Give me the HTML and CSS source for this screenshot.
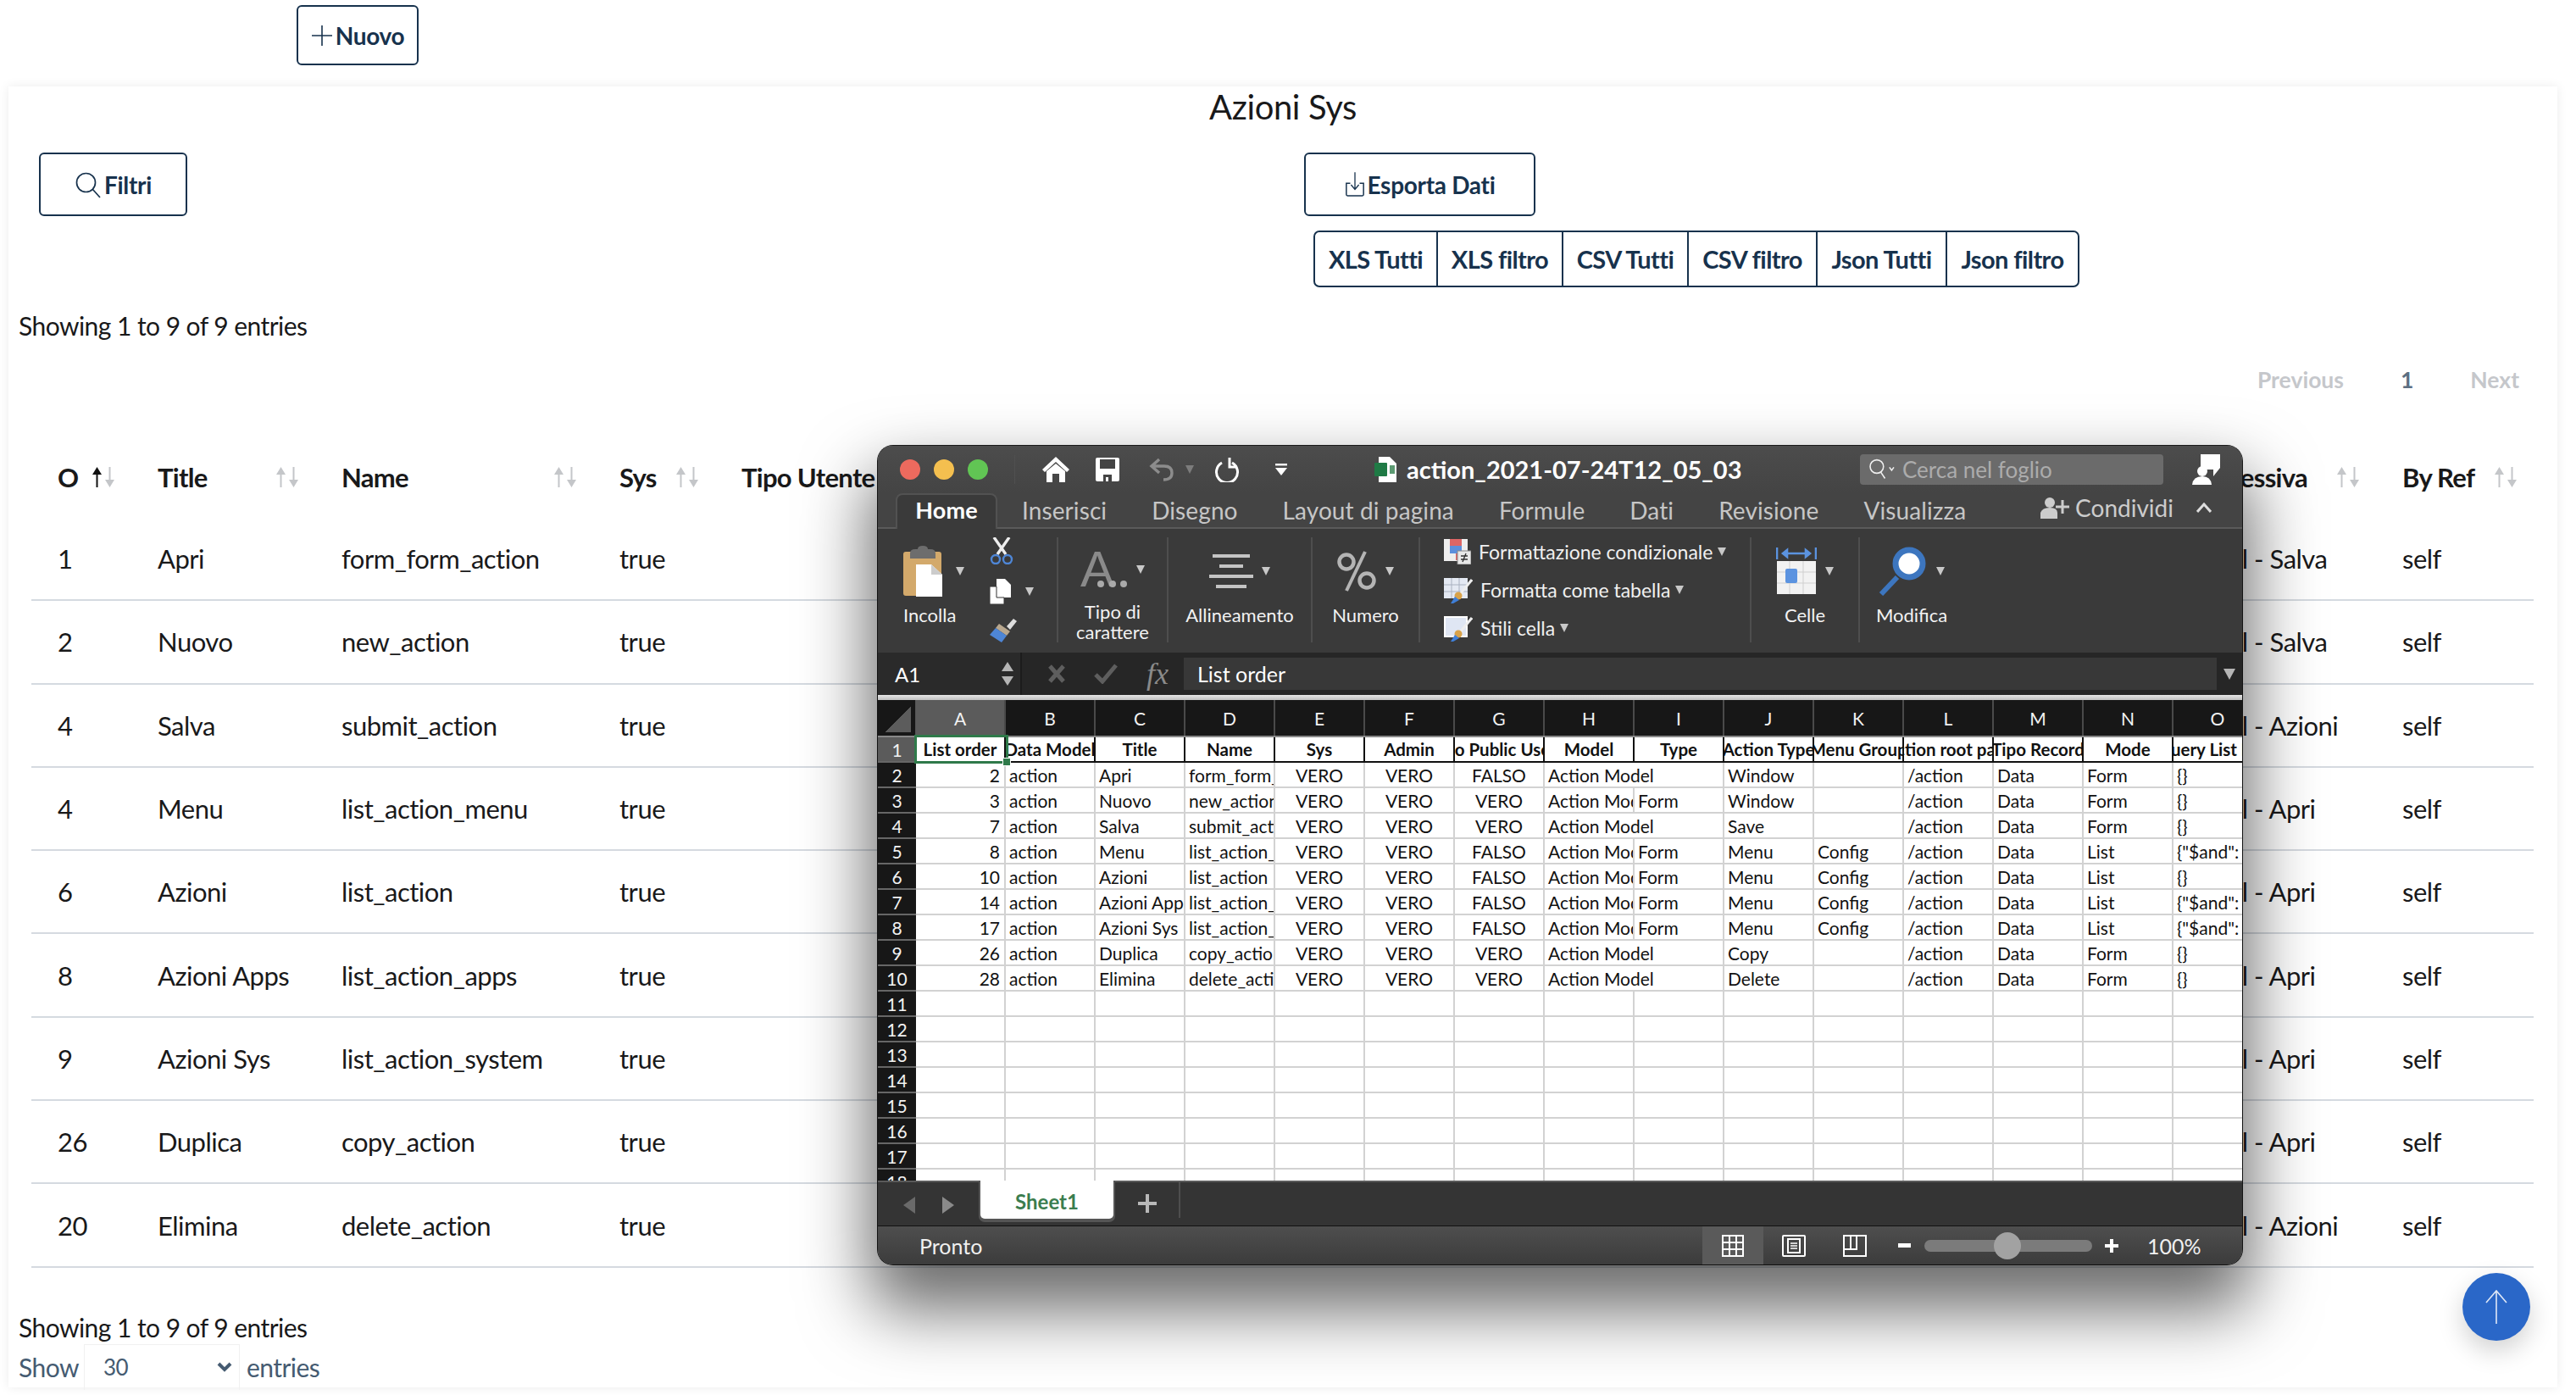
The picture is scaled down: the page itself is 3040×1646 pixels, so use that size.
FILE: index.html
```html
<!DOCTYPE html>
<html lang="en">
<head>
    <meta charset="UTF-8">
    <meta name="viewport" content="width=device-width, initial-scale=1.0">
    <title>Azioni Sys</title>
    <link rel="stylesheet" href="styles.css">
</head>
<body>
    <svg class="defs" width="0" height="0">
        <symbol id="sort" viewBox="0 0 30 24">
            <path d="M7.5 0 L13 9 H8.5 V24 H6.5 V9 H2 Z" fill="#c4c6c9"/>
            <path d="M22.5 24 L28 15 H23.5 V0 H21.5 V15 H17 Z" fill="#c4c6c9"/>
        </symbol>
        <symbol id="sort-up" viewBox="0 0 30 24">
            <path d="M7.5 0 L13 9 H8.5 V24 H6.5 V9 H2 Z" fill="#111"/>
            <path d="M22.5 24 L28 15 H23.5 V0 H21.5 V15 H17 Z" fill="#c4c6c9"/>
        </symbol>
    </svg>

    <div class="topbar">
        <button class="btn btn-new">
            <svg width="26" height="26" viewBox="0 0 26 26"><path d="M13 1V25M1 13H25" stroke="#17324d" stroke-width="1.6" fill="none"/></svg>
            Nuovo
        </button>
    </div>

    <div class="card">
        <h2 class="page-title">Azioni Sys</h2>

        <div class="tools">
            <div>
                <button class="btn btn-tool btn-filter">
                    <svg width="32" height="32" viewBox="0 0 32 32"><circle cx="13.5" cy="13.5" r="11" stroke="#17324d" stroke-width="1.7" fill="none"/><path d="M21.5 21.5L30 31" stroke="#17324d" stroke-width="1.7"/></svg>
                    Filtri
                </button>
            </div>
            <div>
                <button class="btn btn-tool btn-export">
                    <svg width="24" height="32" viewBox="0 0 26 32"><path d="M13 0V21M8 16L13 22L18 16" stroke="#17324d" stroke-width="1.4" fill="none"/><path d="M7 14H2V28.5Q2 30 3.5 30H22.5Q24 30 24 28.5V14H19" stroke="#17324d" stroke-width="1.6" fill="none"/></svg>
                    Esporta Dati
                </button>
                <div class="export-group">
                    <button class="export-item w-145">XLS Tutti</button>
                    <button class="export-item w-148">XLS filtro</button>
                    <button class="export-item w-148">CSV Tutti</button>
                    <button class="export-item w-152">CSV filtro</button>
                    <button class="export-item w-153">Json Tutti</button>
                    <button class="export-item w-156">Json filtro</button>
                </div>
            </div>
        </div>

        <div class="info info-top">Showing 1 to 9 of 9 entries</div>

        <div class="pager">
            <span class="pager-off">Previous</span>
            <span class="pager-on">1</span>
            <span class="pager-off">Next</span>
        </div>

        <table class="grid">
            <colgroup>
                <col class="c-order">
                <col class="c-title">
                <col class="c-name">
                <col class="c-sys">
                <col class="c-user">
                <col class="c-next">
                <col class="c-ref">
            </colgroup>
            <thead>
                <tr>
                    <th><div class="th-in">O <svg class="sort"><use href="#sort-up"/></svg></div></th>
                    <th><div class="th-in">Title <svg class="sort"><use href="#sort"/></svg></div></th>
                    <th><div class="th-in">Name <svg class="sort"><use href="#sort"/></svg></div></th>
                    <th><div class="th-in">Sys <svg class="sort"><use href="#sort"/></svg></div></th>
                    <th><div class="th-in">Tipo Utente</div></th>
                    <th class="th-next"><div class="th-in">Azione Successiva <svg class="sort"><use href="#sort"/></svg></div></th>
                    <th><div class="th-in">By Ref <svg class="sort"><use href="#sort"/></svg></div></th>
                </tr>
            </thead>
            <tbody>
                <tr><td>1</td><td>Apri</td><td>form_form_action</td><td>true</td><td></td><td>Action Model - Salva</td><td>self</td></tr>
                <tr><td>2</td><td>Nuovo</td><td>new_action</td><td>true</td><td></td><td>Action Model - Salva</td><td>self</td></tr>
                <tr><td>4</td><td>Salva</td><td>submit_action</td><td>true</td><td></td><td>Action Model - Azioni</td><td>self</td></tr>
                <tr><td>4</td><td>Menu</td><td>list_action_menu</td><td>true</td><td></td><td>Action Model - Apri</td><td>self</td></tr>
                <tr><td>6</td><td>Azioni</td><td>list_action</td><td>true</td><td></td><td>Action Model - Apri</td><td>self</td></tr>
                <tr><td>8</td><td>Azioni Apps</td><td>list_action_apps</td><td>true</td><td></td><td>Action Model - Apri</td><td>self</td></tr>
                <tr><td>9</td><td>Azioni Sys</td><td>list_action_system</td><td>true</td><td></td><td>Action Model - Apri</td><td>self</td></tr>
                <tr><td>26</td><td>Duplica</td><td>copy_action</td><td>true</td><td></td><td>Action Model - Apri</td><td>self</td></tr>
                <tr><td>20</td><td>Elimina</td><td>delete_action</td><td>true</td><td></td><td>Action Model - Azioni</td><td>self</td></tr>
            </tbody>
        </table>

        <div class="info info-bottom">Showing 1 to 9 of 9 entries</div>
        <div class="length">
            <span>Show</span>
            <div class="length-select">
                <span>30</span>
                <svg width="18" height="12" viewBox="0 0 18 12"><path d="M2 2L9 9L16 2" stroke="#455b71" stroke-width="4" fill="none"/></svg>
            </div>
            <span>entries</span>
        </div>
    </div>

    <a class="to-top">
        <svg width="30" height="40" viewBox="0 0 30 40"><path d="M15 1V40M3 15L15 1L27 15" stroke="#dfe8f7" stroke-width="1.6" fill="none"/></svg>
    </a>

    <!-- excel window lying over the page -->
    <div class="xl-win">
        <div class="xl-title">
            <span class="light red"></span>
            <span class="light yellow"></span>
            <span class="light green"></span>
            <span class="xl-title-sep"></span>
            <svg class="i-home" width="32" height="30" viewBox="0 0 32 30"><path d="M16 0L32 15L29 18L16 6L3 18L0 15Z" fill="#fff"/><path d="M5 17L16 8L27 17V30H20V20H12V30H5Z" fill="#fff"/></svg>
            <svg class="i-save" width="28" height="28" viewBox="0 0 28 28"><path d="M2 0H26Q28 0 28 2V26Q28 28 26 28H2Q0 28 0 26V2Q0 0 2 0Z" fill="#fff"/><rect x="5" y="2" width="18" height="11" fill="#444"/><path d="M9 28V20H19V28H15V23H12V28Z" fill="#444"/></svg>
            <svg class="i-undo" width="30" height="28" viewBox="0 0 30 28"><path d="M12 2L3 10L12 18M3 10H18Q27 10 27 18Q27 26 17 26" stroke="#8c8c8c" stroke-width="3.4" fill="none"/></svg>
            <span class="caret caret-dim"></span>
            <svg class="i-redo" width="30" height="30" viewBox="0 0 30 30"><path d="M9 7A12.5 12.5 0 1 0 21 7" stroke="#fff" stroke-width="3" fill="none"/><path d="M20 0V11H29" stroke="#fff" stroke-width="3" fill="none" transform="translate(-2 1)"/></svg>
            <svg class="i-more" width="14" height="14" viewBox="0 0 14 14"><rect width="14" height="2.4" fill="#fff"/><path d="M0 5H14L7 14Z" fill="#fff"/></svg>
            <svg class="i-file" width="26" height="30" viewBox="0 0 26 30"><path d="M5 0H18L26 8V30H5Z" fill="#fff"/><rect y="7" width="15" height="16" rx="1" fill="#1f7a45"/><path d="M18 10h6v10h-6z" fill="#5c9a72"/></svg>
            <span class="xl-filename">action_2021-07-24T12_05_03</span>
            <div class="xl-search">
                <svg width="36" height="32" viewBox="0 0 36 32"><circle cx="11" cy="12" r="9" stroke="#eee" stroke-width="1.8" fill="none"/><path d="M16 19L22 28M28 13L31 17L34 13" stroke="#eee" stroke-width="1.8" fill="none"/></svg>
                <span>Cerca nel foglio</span>
            </div>
            <svg class="i-comment" width="35" height="36" viewBox="0 0 35 36"><path d="M12 0H35V16L27 26V18H12Z" fill="#fff"/><circle cx="14" cy="20" r="6" fill="#fff"/><path d="M2 36Q3 26 14 26Q24 26 25 36Z" fill="#fff"/></svg>
        </div>

        <div class="xl-tabs">
            <span class="xl-tab xl-tab-on">Home</span>
            <span class="xl-tab">Inserisci</span>
            <span class="xl-tab">Disegno</span>
            <span class="xl-tab">Layout di pagina</span>
            <span class="xl-tab">Formule</span>
            <span class="xl-tab">Dati</span>
            <span class="xl-tab">Revisione</span>
            <span class="xl-tab">Visualizza</span>
            <div class="xl-share">
                <svg width="34" height="26" viewBox="0 0 34 26"><circle cx="11" cy="7" r="6" fill="#ccc"/><path d="M0 26V19Q2 13 11 13Q20 13 20 19V26Z" fill="#ccc"/><path d="M26 4V20M18 12H34" stroke="#ccc" stroke-width="3"/></svg>
                <span>Condividi</span>
                <svg width="18" height="12" viewBox="0 0 18 12"><path d="M1 11L9 2L17 11" stroke="#ddd" stroke-width="3" fill="none"/></svg>
            </div>
        </div>

        <div class="xl-ribbon">
            <div class="rb-group rb-paste">
                <div class="rb-big rb-big-paste">
                    <div class="rb-icon">
                        <svg width="46" height="60" viewBox="0 0 46 60"><rect y="7" width="45" height="52" rx="3" fill="#d3a96b"/><path d="M8 9Q8 4 14 4H17Q17 0 23 0Q29 0 29 4H32Q38 4 38 9V15H8Z" fill="#6d6d6d"/><path d="M15 22H33L46 34V60H15Z" fill="#fff"/><path d="M33 22V34H46" fill="#ccc"/></svg>
                        <span class="caret caret-wide"></span>
                    </div>
                    <span class="rb-label">Incolla</span>
                </div>
                <div class="rb-small">
                    <svg width="28" height="32" viewBox="0 0 28 32"><path d="M5 0L19 20M23 0L9 20" stroke="#eee" stroke-width="3.4"/><circle cx="7" cy="26" r="5" stroke="#4e86d6" stroke-width="2.4" fill="none"/><circle cx="21" cy="26" r="5" stroke="#4e86d6" stroke-width="2.4" fill="none"/></svg>
                    <div class="rb-copy">
                        <svg width="26" height="30" viewBox="0 0 26 30"><path d="M8 0H18L25 7V22H8Z" fill="#fff"/><path d="M0 9H8V22H17V30H0Z" fill="#fff" stroke="#333" stroke-width="1"/></svg>
                        <span class="caret caret-wide"></span>
                    </div>
                    <svg width="32" height="28" viewBox="0 0 32 28"><path d="M20 9L28 0L32 3L24 13Z" fill="#ddd"/><path d="M11 6L24 15L20 20L7 11Z" fill="#b8a78e"/><path d="M7 11L20 20L14 28L0 19Z" fill="#4e86d6"/></svg>
                </div>
            </div>
            <div class="rb-group rb-font">
                <div class="rb-big">
                    <div class="rb-icon">
                        <svg class="rb-a" width="56" height="46" viewBox="0 0 56 46"><text x="0" y="43" font-family="Liberation Sans" font-size="60" fill="#8a8a8a">A</text><circle cx="24" cy="40" r="4" fill="#aaa"/><circle cx="38" cy="40" r="4" fill="#aaa"/><circle cx="51" cy="40" r="4" fill="#aaa"/></svg>
                        <span class="caret"></span>
                    </div>
                    <span class="rb-label">Tipo di<br>carattere</span>
                </div>
            </div>
            <div class="rb-group rb-align">
                <div class="rb-big">
                    <div class="rb-icon">
                        <svg width="52" height="40" viewBox="0 0 52 40"><rect x="4" width="44" height="4" fill="#c4c4c4"/><rect x="12" y="12" width="28" height="4" fill="#c4c4c4"/><rect y="24" width="52" height="4" fill="#c4c4c4"/><rect x="8" y="36" width="36" height="4" fill="#c4c4c4"/></svg>
                        <span class="caret"></span>
                    </div>
                    <span class="rb-label">Allineamento</span>
                </div>
            </div>
            <div class="rb-group rb-number">
                <div class="rb-big">
                    <div class="rb-icon">
                        <svg width="48" height="48" viewBox="0 0 48 48"><circle cx="12" cy="13" r="8.5" stroke="#b4b4b4" stroke-width="4.5" fill="none"/><circle cx="36" cy="35" r="8.5" stroke="#b4b4b4" stroke-width="4.5" fill="none"/><path d="M34 1L12 47" stroke="#b4b4b4" stroke-width="4"/></svg>
                        <span class="caret"></span>
                    </div>
                    <span class="rb-label">Numero</span>
                </div>
            </div>
            <div class="rb-group rb-styles">
                <div class="rb-line">
                    <svg width="32" height="30" viewBox="0 0 32 30"><rect width="28" height="26" fill="#eee"/><rect x="7" width="14" height="8" fill="#d66"/><rect x="7" y="8" width="14" height="9" fill="#5c8fdc"/><rect x="14" y="17" width="7" height="8" fill="#d66"/><rect x="16" y="14" width="16" height="16" fill="#e8e8e8" stroke="#888"/><path d="M20 20H28M20 24H28M26 17L22 27" stroke="#333" stroke-width="1.4"/></svg>
                    <span>Formattazione condizionale</span><span class="caret"></span>
                </div>
                <div class="rb-line">
                    <svg width="34" height="32" viewBox="0 0 34 32"><rect y="2" width="28" height="24" fill="#e4e9f3"/><path d="M0 10H28M0 18H28M9 2V26M18 2V26" stroke="#a9b1c0"/><path d="M33 4L19 21" stroke="#eee" stroke-width="3"/><circle cx="17" cy="23" r="4.5" fill="#d8a24a"/><path d="M13 24L18 28L11 32H8Z" fill="#3f7fd8"/></svg>
                    <span>Formatta come tabella</span><span class="caret"></span>
                </div>
                <div class="rb-line">
                    <svg width="34" height="32" viewBox="0 0 34 32"><rect x="1" y="3" width="26" height="23" fill="#dfe6f3" stroke="#fff" stroke-width="2"/><path d="M33 4L19 21" stroke="#eee" stroke-width="3"/><circle cx="17" cy="23" r="4.5" fill="#d8a24a"/><path d="M13 24L18 28L11 32H8Z" fill="#3f7fd8"/></svg>
                    <span>Stili cella</span><span class="caret"></span>
                </div>
            </div>
            <div class="rb-group rb-cells">
                <div class="rb-big">
                    <div class="rb-icon">
                        <svg width="48" height="56" viewBox="0 0 48 56"><path d="M1 0V14M47 0V14M8 7H40M8 7L13 3V11ZM40 7L35 3V11Z" stroke="#5b93e0" stroke-width="2.6" fill="#5b93e0"/><rect x="1" y="16" width="46" height="39" fill="#f2f2f2"/><path d="M1 29H47M1 42H47M16 16V55M32 16V55" stroke="#cfcfcf"/><rect x="11" y="25" width="14" height="17" rx="2" fill="#5b93e0"/></svg>
                        <span class="caret"></span>
                    </div>
                    <span class="rb-label">Celle</span>
                </div>
            </div>
            <div class="rb-group rb-edit">
                <div class="rb-big">
                    <div class="rb-icon">
                        <svg width="58" height="58" viewBox="0 0 58 58"><path d="M22 36L3 56" stroke="#3d76bf" stroke-width="6"/><circle cx="36" cy="20" r="16" fill="#fff" stroke="#3d76bf" stroke-width="7"/></svg>
                        <span class="caret"></span>
                    </div>
                    <span class="rb-label">Modifica</span>
                </div>
            </div>
        </div>

        <div class="xl-formula">
            <div class="xl-namebox">
                <span>A1</span>
                <span class="spin"><i class="spin-up"></i><i class="spin-down"></i></span>
            </div>
            <svg class="i-x" width="20" height="22" viewBox="0 0 20 22"><path d="M2 2L18 20M18 2L2 20" stroke="#5e5e5e" stroke-width="5"/></svg>
            <svg class="i-ok" width="28" height="24" viewBox="0 0 28 24"><path d="M2 13L10 21L26 2" stroke="#5e5e5e" stroke-width="5" fill="none"/></svg>
            <span class="xl-fx">fx</span>
            <div class="xl-input">List order</div>
            <span class="xl-fdrop"></span>
        </div>

        <div class="xl-band"></div>

        <div class="xl-sheet">
            <div class="x-row x-head">
                <div class="x-corner"><span></span></div>
                <div class="x-col x-col-on">A</div><div class="x-col">B</div><div class="x-col">C</div><div class="x-col">D</div><div class="x-col">E</div><div class="x-col">F</div><div class="x-col">G</div><div class="x-col">H</div><div class="x-col">I</div><div class="x-col">J</div><div class="x-col">K</div><div class="x-col">L</div><div class="x-col">M</div><div class="x-col">N</div><div class="x-col">O</div>
            </div>

            <div class="x-row x-bold">
                <div class="x-num x-num-on">1</div>
                <div class="x-c ctr">List order</div><div class="x-c ctr">Data Model</div><div class="x-c ctr">Title</div><div class="x-c ctr">Name</div><div class="x-c ctr">Sys</div><div class="x-c ctr">Admin</div><div class="x-c ctr">No Public User</div><div class="x-c ctr">Model</div><div class="x-c ctr">Type</div><div class="x-c ctr">Action Type</div><div class="x-c ctr">Menu Group</div><div class="x-c ctr">Action root path</div><div class="x-c ctr">Tipo Record</div><div class="x-c ctr">Mode</div><div class="x-c ctr">Query List Data</div>
            </div>

            <div class="x-row">
                <div class="x-num">2</div>
                <div class="x-c rgt">2</div><div class="x-c">action</div><div class="x-c">Apri</div><div class="x-c">form_form_action</div><div class="x-c ctr">VERO</div><div class="x-c ctr">VERO</div><div class="x-c ctr">FALSO</div><div class="x-c span2">Action Model</div><div class="x-c">Window</div><div class="x-c"></div><div class="x-c">/action</div><div class="x-c">Data</div><div class="x-c">Form</div><div class="x-c">{}</div>
            </div>
            <div class="x-row">
                <div class="x-num">3</div>
                <div class="x-c rgt">3</div><div class="x-c">action</div><div class="x-c">Nuovo</div><div class="x-c">new_action</div><div class="x-c ctr">VERO</div><div class="x-c ctr">VERO</div><div class="x-c ctr">VERO</div><div class="x-c">Action Model</div><div class="x-c">Form</div><div class="x-c">Window</div><div class="x-c"></div><div class="x-c">/action</div><div class="x-c">Data</div><div class="x-c">Form</div><div class="x-c">{}</div>
            </div>
            <div class="x-row">
                <div class="x-num">4</div>
                <div class="x-c rgt">7</div><div class="x-c">action</div><div class="x-c">Salva</div><div class="x-c">submit_action</div><div class="x-c ctr">VERO</div><div class="x-c ctr">VERO</div><div class="x-c ctr">VERO</div><div class="x-c span2">Action Model</div><div class="x-c">Save</div><div class="x-c"></div><div class="x-c">/action</div><div class="x-c">Data</div><div class="x-c">Form</div><div class="x-c">{}</div>
            </div>
            <div class="x-row">
                <div class="x-num">5</div>
                <div class="x-c rgt">8</div><div class="x-c">action</div><div class="x-c">Menu</div><div class="x-c">list_action_menu</div><div class="x-c ctr">VERO</div><div class="x-c ctr">VERO</div><div class="x-c ctr">FALSO</div><div class="x-c">Action Model</div><div class="x-c">Form</div><div class="x-c">Menu</div><div class="x-c">Config</div><div class="x-c">/action</div><div class="x-c">Data</div><div class="x-c">List</div><div class="x-c">{"$and":</div>
            </div>
            <div class="x-row">
                <div class="x-num">6</div>
                <div class="x-c rgt">10</div><div class="x-c">action</div><div class="x-c">Azioni</div><div class="x-c">list_action</div><div class="x-c ctr">VERO</div><div class="x-c ctr">VERO</div><div class="x-c ctr">FALSO</div><div class="x-c">Action Model</div><div class="x-c">Form</div><div class="x-c">Menu</div><div class="x-c">Config</div><div class="x-c">/action</div><div class="x-c">Data</div><div class="x-c">List</div><div class="x-c">{}</div>
            </div>
            <div class="x-row">
                <div class="x-num">7</div>
                <div class="x-c rgt">14</div><div class="x-c">action</div><div class="x-c">Azioni Apps</div><div class="x-c">list_action_apps</div><div class="x-c ctr">VERO</div><div class="x-c ctr">VERO</div><div class="x-c ctr">FALSO</div><div class="x-c">Action Model</div><div class="x-c">Form</div><div class="x-c">Menu</div><div class="x-c">Config</div><div class="x-c">/action</div><div class="x-c">Data</div><div class="x-c">List</div><div class="x-c">{"$and":</div>
            </div>
            <div class="x-row">
                <div class="x-num">8</div>
                <div class="x-c rgt">17</div><div class="x-c">action</div><div class="x-c">Azioni Sys</div><div class="x-c">list_action_system</div><div class="x-c ctr">VERO</div><div class="x-c ctr">VERO</div><div class="x-c ctr">FALSO</div><div class="x-c">Action Model</div><div class="x-c">Form</div><div class="x-c">Menu</div><div class="x-c">Config</div><div class="x-c">/action</div><div class="x-c">Data</div><div class="x-c">List</div><div class="x-c">{"$and":</div>
            </div>
            <div class="x-row">
                <div class="x-num">9</div>
                <div class="x-c rgt">26</div><div class="x-c">action</div><div class="x-c">Duplica</div><div class="x-c">copy_action</div><div class="x-c ctr">VERO</div><div class="x-c ctr">VERO</div><div class="x-c ctr">VERO</div><div class="x-c span2">Action Model</div><div class="x-c">Copy</div><div class="x-c"></div><div class="x-c">/action</div><div class="x-c">Data</div><div class="x-c">Form</div><div class="x-c">{}</div>
            </div>
            <div class="x-row">
                <div class="x-num">10</div>
                <div class="x-c rgt">28</div><div class="x-c">action</div><div class="x-c">Elimina</div><div class="x-c">delete_action</div><div class="x-c ctr">VERO</div><div class="x-c ctr">VERO</div><div class="x-c ctr">VERO</div><div class="x-c span2">Action Model</div><div class="x-c">Delete</div><div class="x-c"></div><div class="x-c">/action</div><div class="x-c">Data</div><div class="x-c">Form</div><div class="x-c">{}</div>
            </div>

            <div class="x-row x-empty"><div class="x-num">11</div></div>
            <div class="x-row x-empty"><div class="x-num">12</div></div>
            <div class="x-row x-empty"><div class="x-num">13</div></div>
            <div class="x-row x-empty"><div class="x-num">14</div></div>
            <div class="x-row x-empty"><div class="x-num">15</div></div>
            <div class="x-row x-empty"><div class="x-num">16</div></div>
            <div class="x-row x-empty"><div class="x-num">17</div></div>
            <div class="x-row x-empty"><div class="x-num">18</div></div>

            <div class="x-cursor"><span></span></div>
        </div>

        <div class="xl-sheets">
            <span class="tri-left"></span>
            <span class="tri-right"></span>
            <span class="sheet-tab">Sheet1</span>
            <svg class="i-add" width="22" height="30" viewBox="0 0 22 30"><path d="M11 4V26M0 15H22" stroke="#b8b8b8" stroke-width="4"/></svg>
            <span class="sheets-sep"></span>
        </div>

        <div class="xl-status">
            <span class="status-text">Pronto</span>
            <div class="view-btn view-on">
                <svg width="26" height="26" viewBox="0 0 26 26"><rect x="1" y="1" width="24" height="24" fill="none" stroke="#fff" stroke-width="2"/><path d="M1 9H25M1 17H25M9 1V25M17 1V25" stroke="#fff" stroke-width="2"/></svg>
            </div>
            <div class="view-btn">
                <svg width="28" height="26" viewBox="0 0 28 26"><rect x="1" y="1" width="26" height="24" rx="1" fill="none" stroke="#fff" stroke-width="2"/><rect x="7" y="5" width="14" height="16" fill="none" stroke="#fff" stroke-width="2"/><path d="M10 10H18M10 13H18M10 16H18" stroke="#fff" stroke-width="1.5"/></svg>
            </div>
            <div class="view-btn">
                <svg width="28" height="26" viewBox="0 0 28 26"><path d="M1 1H27V25H1ZM1 17H16V1M9 1V17" fill="none" stroke="#fff" stroke-width="2"/></svg>
            </div>
            <span class="zoom-minus"></span>
            <div class="zoom-track"><span class="zoom-thumb"></span></div>
            <svg class="i-plus" width="16" height="18" viewBox="0 0 16 18"><path d="M8 1V17M0 9H16" stroke="#fff" stroke-width="4"/></svg>
            <span class="zoom-value">100%</span>
        </div>
    </div>
</body>
</html>
```

FILE: styles.css
```css
* {
    box-sizing: border-box;
}

html, body {
    height: 1646px;
}

body {
    margin: 0;
    position: relative;
    overflow: hidden;
    background-color: #fff;
    color: #19191a;
    font-family: "Lato", "Open Sans", sans-serif;
    font-size: 31px;
}

.defs {
    position: absolute;
}

/* page */
.topbar {
    padding: 6px 0 0 350px;
}

.btn {
    display: flex;
    align-items: center;
    justify-content: center;
    gap: 3px;
    background: #fff;
    border: 2px solid #17324d;
    border-radius: 6px;
    color: #17324d;
    font-family: inherit;
    font-size: 28px;
    font-weight: 700;
    letter-spacing: -0.3px;
}

.btn-new {
    width: 144px;
    height: 71px;
}

.card {
    margin: 25px 22px 0 10px;
    height: 1535px;
    background: #fff;
    box-shadow: 0 0 12px rgba(0, 0, 0, 0.08);
}

.page-title {
    margin: 0;
    height: 48px;
    line-height: 48px;
    text-align: center;
    font-size: 40px;
    font-weight: 400;
    letter-spacing: -0.4px;
}

.tools {
    display: grid;
    grid-template-columns: 1529px 1fr;
    margin-top: 30px;
}

.btn-tool {
    height: 75px;
}

.btn-filter {
    width: 175px;
    margin-left: 36px;
}

.btn-export {
    width: 273px;
}

.export-group {
    display: flex;
    width: 904px;
    height: 67px;
    margin: 17px 0 0 11px;
    border: 2px solid #17324d;
    border-radius: 7px;
}

.export-item {
    height: 100%;
    padding: 0;
    background: none;
    border: 0;
    border-right: 2px solid #17324d;
    color: #17324d;
    font-family: inherit;
    font-size: 29px;
    font-weight: 700;
    letter-spacing: -0.6px;
}

.export-item:last-child {
    border-right: 0;
}

.w-145 { width: 145px; }
.w-148 { width: 148px; }
.w-152 { width: 152px; }
.w-153 { width: 153px; }
.w-156 { width: 154px; }

.info {
    height: 40px;
    line-height: 40px;
    padding-left: 12px;
    font-size: 30px;
    font-weight: 400;
    letter-spacing: -0.55px;
}

.info-top {
    margin-top: 25px;
}

.pager {
    display: flex;
    justify-content: flex-end;
    gap: 67px;
    height: 40px;
    line-height: 40px;
    margin-top: 24px;
    padding-right: 45px;
    font-size: 26.5px;
    font-weight: 700;
}

.pager-off {
    color: #c5c7cb;
}

.pager-on {
    color: #5c6f82;
}

.grid {
    width: 2953px;
    margin: 47px 0 0 27px;
    border-collapse: collapse;
    table-layout: fixed;
}

.c-order { width: 118px; }
.c-title { width: 217px; }
.c-name { width: 328px; }
.c-sys { width: 144px; }
.c-user { width: 1600px; }
.c-next { width: 360px; }
.c-ref { width: 186px; }

.grid th {
    height: 95px;
    padding: 0 18px 0 31px;
    text-align: left;
    white-space: nowrap;
    overflow: hidden;
    font-weight: 700;
    letter-spacing: -0.7px;
}

.grid .th-next {
    padding-left: 41px;
}

.th-in {
    display: flex;
    align-items: center;
    justify-content: space-between;
}

.sort {
    width: 30px;
    height: 24px;
    flex: none;
}

.grid td {
    height: 98.3px;
    padding: 0 0 0 31px;
    border-bottom: 2px solid #d5dae0;
    white-space: nowrap;
    overflow: hidden;
    font-weight: 400;
    letter-spacing: -0.5px;
}

.info-bottom {
    margin-top: 50px;
}

.length {
    display: flex;
    align-items: center;
    height: 54px;
    margin-top: 0;
    padding-left: 12px;
    color: #455b71;
    font-size: 30px;
    letter-spacing: -0.55px;
}

.length-select {
    display: flex;
    align-items: center;
    justify-content: space-between;
    width: 184px;
    height: 54px;
    margin: 0 8px 0 6px;
    padding: 0 8px 0 22px;
    border: 1px solid #f1f1f1;
    border-bottom: 0;
    font-size: 26px;
}

.to-top {
    position: absolute;
    left: 2906px;
    top: 1502px;
    display: flex;
    align-items: center;
    justify-content: center;
    width: 80px;
    height: 80px;
    border-radius: 50%;
    background-color: #2a67c8;
    box-shadow: 0 12px 30px rgba(0, 0, 0, 0.18);
}

/* excel window */
.xl-win {
    position: absolute;
    left: 1036px;
    top: 526px;
    z-index: 1;
    width: 1610px;
    height: 966px;
    display: flex;
    flex-direction: column;
    overflow: hidden;
    border-radius: 18px;
    background-color: #3a3a3a;
    color: #fff;
    font-family: "Lato", sans-serif;
}

body::after {
    content: "";
    position: absolute;
    left: 1036px;
    top: 526px;
    width: 1610px;
    height: 966px;
    border-radius: 18px;
    box-shadow: 0 44px 80px 10px rgba(0, 0, 0, 0.58), 0 0 0 1px #1d1d1d;
}

.xl-title {
    display: flex;
    align-items: center;
    height: 56px;
    padding: 0 26px 1px 26px;
    background: linear-gradient(#4c4c4c, #444);
    flex: none;
}

.light {
    width: 24px;
    height: 24px;
    border-radius: 50%;
    margin-right: 16px;
}

.red { background-color: #ed6a5e; }
.yellow { background-color: #f4bf4f; }
.green { background-color: #61c554; }

.xl-title-sep {
    width: 1px;
    height: 34px;
    margin: 0 0 0 15px;
    background-color: #505050;
}

.i-home { margin-left: 32px; }
.i-save { margin-left: 31px; }
.i-undo { margin-left: 35px; }
.i-redo { margin-left: 24px; }
.i-more { margin-left: 42px; }
.i-file { margin-left: 103px; }

.caret {
    display: inline-block;
    flex: none;
    width: 0;
    height: 0;
    margin-left: 10px;
    border-left: 5px solid transparent;
    border-right: 5px solid transparent;
    border-top: 10px solid #c8c8c8;
}

.caret-dim {
    margin-left: 13px;
    border-top-color: #7c7c7c;
}

.caret-wide {
    margin-left: 16px;
}

.xl-filename {
    margin-left: 12px;
    width: 400px;
    white-space: nowrap;
    font-size: 29px;
    font-weight: 700;
}

.xl-search {
    display: flex;
    align-items: center;
    gap: 8px;
    width: 358px;
    height: 36px;
    margin-left: auto;
    padding-left: 10px;
    border-radius: 4px;
    background-color: #6b6b6b;
    color: #acacac;
    font-size: 26px;
}

.xl-search svg {
    flex: none;
    width: 32px;
    height: 28px;
}

.i-comment {
    margin-left: 32px;
}

.xl-tabs {
    display: flex;
    align-items: flex-end;
    gap: 53px;
    height: 42px;
    padding-left: 21px;
    background-color: #444;
    border-bottom: 2px solid #5a5a5a;
    flex: none;
}

.xl-tab {
    height: 37px;
    line-height: 34px;
    color: #c6c6c6;
    font-size: 28px;
    letter-spacing: 0.1px;
    white-space: nowrap;
}

.xl-tab-on {
    width: 120px;
    height: 42px;
    line-height: 36px;
    margin: 0 -24px -2px 0;
    text-align: center;
    border: 2px solid #525252;
    border-bottom: 0;
    border-radius: 8px 8px 0 0;
    background-color: #3a3a3a;
    color: #fff;
    font-size: 27px;
    font-weight: 700;
}

.xl-share {
    display: flex;
    align-items: center;
    gap: 7px;
    margin: 0 0 6px auto;
    padding-right: 36px;
    color: #ccc;
    font-size: 28px;
}

.xl-share svg:last-child {
    margin-left: 20px;
}

.xl-ribbon {
    display: flex;
    height: 146px;
    padding: 10px 0 12px;
    flex: none;
    background-color: #3a3a3a;
}

.rb-group {
    display: flex;
    justify-content: center;
    border-right: 2px solid #4e4e4e;
}

.rb-paste { width: 213px; justify-content: flex-start; padding-left: 30px; }
.rb-font { width: 130px; }
.rb-align { width: 170px; }
.rb-number { width: 127px; }
.rb-styles { width: 391px; flex-direction: column; justify-content: space-between; padding-left: 28px; }
.rb-cells { width: 128px; }
.rb-edit { width: 122px; border-right: 0; }

.rb-big {
    display: flex;
    flex-direction: column;
    align-items: center;
    color: #f2f2f2;
}

.rb-big-paste {
    width: 102px;
    align-items: flex-start;
}

.rb-icon {
    display: flex;
    align-items: center;
    height: 80px;
}

.rb-label {
    font-size: 22px;
    line-height: 24px;
    text-align: center;
}

.rb-small {
    display: flex;
    flex-direction: column;
    justify-content: space-between;
    align-items: flex-start;
    height: 124px;
}

.rb-copy {
    display: flex;
    align-items: center;
}

.rb-line {
    display: flex;
    align-items: center;
    gap: 9px;
    height: 34px;
    color: #f0f0f0;
    font-size: 23px;
    white-space: nowrap;
}

.rb-line .caret {
    margin-left: -3px;
}

.xl-formula {
    display: flex;
    align-items: center;
    height: 50px;
    flex: none;
    background-color: #262626;
}

.xl-namebox {
    display: flex;
    align-items: center;
    justify-content: space-between;
    width: 170px;
    height: 100%;
    padding: 0 8px 0 20px;
    background-color: #2a2a2a;
    border-right: 2px solid #1c1c1c;
    font-size: 24px;
}

.spin {
    display: flex;
    flex-direction: column;
    gap: 6px;
}

.spin i {
    display: block;
    width: 0;
    border-left: 7px solid transparent;
    border-right: 7px solid transparent;
}

.spin-up { border-bottom: 11px solid #b5b5b5; }
.spin-down { border-top: 11px solid #b5b5b5; }

.i-x { margin-left: 31px; }
.i-ok { margin-left: 34px; }

.xl-fx {
    margin-left: 34px;
    width: 44px;
    color: #8a8a8a;
    font-family: "Liberation Serif", serif;
    font-style: italic;
    font-size: 36px;
}

.xl-input {
    width: 1219px;
    height: 38px;
    line-height: 38px;
    padding-left: 16px;
    background-color: #383838;
    font-size: 25px;
}

.xl-fdrop {
    width: 0;
    margin-left: 8px;
    border-left: 7px solid transparent;
    border-right: 7px solid transparent;
    border-top: 13px solid #b5b5b5;
}

.xl-band {
    height: 6px;
    flex: none;
    background: linear-gradient(#e6e6e6, #bfbfbf);
}

/* sheet */
.xl-sheet {
    position: relative;
    height: 567px;
    flex: none;
    overflow: hidden;
    background-color: #fff;
    color: #111;
    font-size: 21px;
}

.x-row {
    display: grid;
    grid-template-columns: 45px repeat(15, 106px);
    height: 30px;
    width: 1635px;
}

.x-head {
    height: 44px;
    background-color: #171717;
    border-bottom: 2px solid #888;
}

.x-corner {
    display: flex;
    align-items: flex-end;
    padding: 0 4px 4px 9px;
    border-right: 1px solid #555;
}

.x-corner span {
    width: 30px;
    height: 30px;
    background: linear-gradient(135deg, transparent 50%, #5c5c5c 50%);
}

.x-col {
    display: flex;
    align-items: center;
    justify-content: center;
    border-right: 2px solid #4a4a4a;
    color: #f2f2f2;
    font-size: 21px;
}

.x-col-on {
    background-color: #5b5b5b;
}

.x-num {
    display: flex;
    align-items: center;
    justify-content: center;
    background-color: #171717;
    border-bottom: 2px solid #666;
    color: #f2f2f2;
    font-size: 21px;
}

.x-num-on {
    background-color: #5b5b5b;
}

.x-c {
    display: flex;
    align-items: center;
    padding-left: 4px;
    overflow: hidden;
    white-space: nowrap;
    border-right: 2px solid #d2d2d2;
    border-bottom: 2px solid #d2d2d2;
}

.ctr {
    justify-content: center;
    padding: 0;
}

.rgt {
    justify-content: flex-end;
    padding: 0 5px 0 0;
}

.span2 {
    grid-column: span 2;
}

.x-bold .x-c {
    border-right: 2px solid #111;
    border-bottom: 2px solid #111;
    font-size: 20.5px;
    font-weight: 700;
}

.x-empty {
    background-image:
        linear-gradient(#d2d2d2, #d2d2d2),
        repeating-linear-gradient(90deg, transparent 0 104px, #d2d2d2 104px 106px);
    background-size: 100% 2px, 100% 100%;
    background-position: 0 28px, 45px 0;
    background-repeat: no-repeat;
}

.x-cursor {
    position: absolute;
    left: 43px;
    top: 41px;
    width: 111px;
    height: 34px;
    border: 3px solid #2f7a4a;
}

.x-cursor span {
    position: absolute;
    right: -6px;
    bottom: -6px;
    width: 10px;
    height: 10px;
    background-color: #2f7a4a;
    border: 1px solid #fff;
}

.xl-sheets {
    display: flex;
    align-items: flex-start;
    height: 54px;
    flex: none;
    background-color: #343434;
    border-top: 2px solid #5a5a5a;
    border-bottom: 1px solid #111;
}

.tri-left, .tri-right {
    width: 0;
    margin-top: 17px;
    border-top: 10px solid transparent;
    border-bottom: 10px solid transparent;
}

.tri-left {
    margin-left: 30px;
    border-right: 14px solid #6a6a6a;
}

.tri-right {
    margin-left: 32px;
    border-left: 14px solid #8a8a8a;
}

.sheet-tab {
    width: 157px;
    height: 45px;
    line-height: 50px;
    margin: -2px 0 0 31px;
    text-align: center;
    border-radius: 0 0 5px 5px;
    background-color: #fff;
    box-shadow: 0 2px 0 2px #555;
    color: #3b7d4f;
    font-size: 24px;
    font-weight: 700;
}

.i-add {
    margin: 10px 0 0 29px;
}

.sheets-sep {
    width: 2px;
    height: 42px;
    margin: 0 0 0 26px;
    background-color: #4e4e4e;
}

.xl-status {
    display: flex;
    align-items: center;
    flex: 1;
    padding-left: 49px;
    background: linear-gradient(#4e4e4e, #3c3c3c);
    font-size: 25px;
}

.status-text {
    width: 924px;
    color: #f0f0f0;
}

.view-btn {
    display: flex;
    align-items: center;
    justify-content: center;
    width: 72px;
    height: 100%;
}

.view-on {
    background-color: #5a5a5a;
}

.zoom-minus {
    width: 15px;
    height: 5px;
    margin-left: 15px;
    background-color: #fff;
}

.zoom-track {
    position: relative;
    width: 198px;
    height: 14px;
    margin-left: 16px;
    border-radius: 7px;
    background-color: #7b7b7b;
}

.zoom-thumb {
    position: absolute;
    left: 82px;
    top: -9px;
    width: 32px;
    height: 32px;
    border-radius: 50%;
    background-color: #a2a2a2;
}

.i-plus {
    margin-left: 15px;
}

.zoom-value {
    margin-left: 34px;
    color: #f0f0f0;
}
```
